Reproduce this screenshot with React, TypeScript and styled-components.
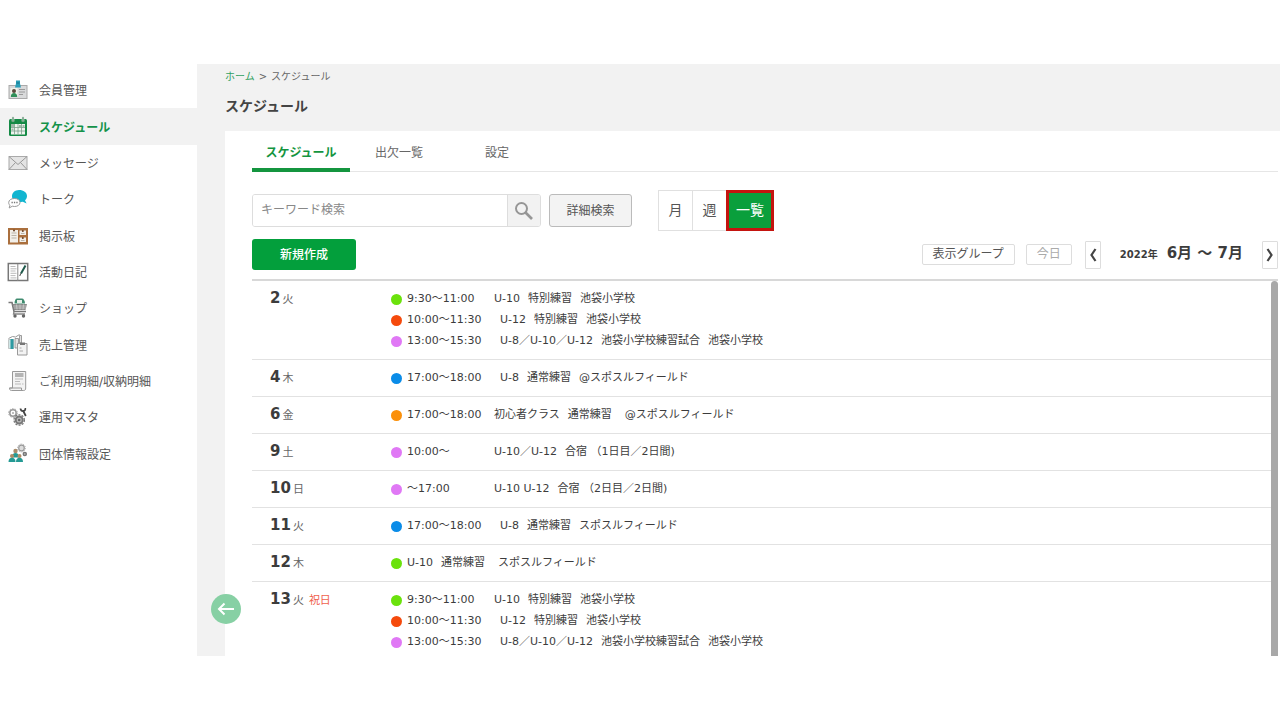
import React from 'react';
import styled, { createGlobalStyle, css } from 'styled-components';

const GlobalStyle = createGlobalStyle`
  * { box-sizing: border-box; }
  body {
    margin: 0;
    background: #fff;
    color: #444;
    font-family: "DejaVu Sans", "Noto Sans CJK JP", sans-serif;
    font-size: 12px;
  }
  button, input { font: inherit; color: inherit; margin: 0; padding: 0; }
  button { cursor: pointer; }
`;

const Frame = styled.div`
  height: 100vh;
  padding: 64px 0;
  display: flex;
  overflow: hidden;
`;

/* ---------- sidebar ---------- */

const Sidebar = styled.nav`
  flex: 0 0 197px;
  padding-top: 8px;
`;

const Menu = styled.ul`
  list-style: none;
  margin: 0;
  padding: 0;
  height: 400px;
  display: grid;
  grid-auto-rows: 1fr;
`;

const MenuLink = styled.a<{ $active?: boolean }>`
  height: 100%;
  padding-left: 7px;
  display: flex;
  align-items: center;
  gap: 10px;
  color: #555;
  text-decoration: none;
  white-space: nowrap;
  ${(p) =>
    p.$active &&
    css`
      background: #f2f2f2;
      color: #14934a;
      font-weight: bold;
    `}
`;

const MenuLabel = styled.span`
  padding-bottom: 1px;
`;

const MenuIcon = styled.svg`
  width: 22px;
  height: 22px;
  flex: none;
`;

/* ---------- main ---------- */

const Main = styled.main`
  flex: 1;
  min-width: 0;
  position: relative;
  padding-left: 28px;
  background: #f2f2f2;
  display: flex;
  flex-direction: column;
`;

const Breadcrumb = styled.nav`
  display: flex;
  gap: 4px;
  font-size: 10px;
  line-height: 26px;
  color: #666;
`;

const CrumbLink = styled.a`
  color: #33a162;
  text-decoration: none;
`;

const Title = styled.h1`
  margin: 0 0 9px;
  font-size: 14px;
  line-height: 32px;
  color: #444;
`;

const Panel = styled.section`
  flex: 1;
  min-height: 0;
  padding: 0 2px 0 27px;
  background: #fff;
  display: flex;
  flex-direction: column;
`;

const Tabs = styled.div`
  flex: none;
  display: flex;
  border-bottom: 1px solid #e6e6e6;
`;

const Tab = styled.button<{ $active?: boolean }>`
  width: 98px;
  height: 41px;
  margin-bottom: -1px;
  padding-top: 4px;
  border: 0;
  border-bottom: 4px solid ${(p) => (p.$active ? '#14953f' : 'transparent')};
  background: none;
  color: ${(p) => (p.$active ? '#14953f' : '#666')};
  font-weight: ${(p) => (p.$active ? 'bold' : 'normal')};
`;

const Toolbar = styled.div`
  flex: none;
  padding-top: 18px;
  display: flex;
  align-items: center;
`;

const SearchForm = styled.form`
  width: 289px;
  height: 33px;
  display: flex;
  border: 1px solid #ddd;
  border-radius: 3px;
  overflow: hidden;
`;

const SearchInput = styled.input`
  flex: 1;
  min-width: 0;
  padding: 0 8px 2px;
  border: 0;
  outline: 0;
  background: #fff;
  &::placeholder { color: #888; opacity: 1; }
`;

const SearchButton = styled.button`
  width: 33px;
  border: 0;
  border-left: 1px solid #ddd;
  background: #f2f2f2;
  display: flex;
  align-items: center;
  justify-content: center;
`;

const DetailButton = styled.button`
  width: 83px;
  height: 33px;
  margin: 0 26px 0 8px;
  padding-bottom: 3px;
  border: 1px solid #bbb;
  border-radius: 3px;
  background: #f3f3f3;
  color: #555;
`;

const ViewSwitch = styled.div`
  display: flex;
  height: 41px;
`;

const ViewButton = styled.button<{ $active?: boolean }>`
  width: 34px;
  padding: 0 0 3px;
  border: 1px solid #e0e0e0;
  border-right-width: 0;
  background: #fff;
  color: #555;
  font-size: 14px;
  ${(p) =>
    p.$active &&
    css`
      width: 48px;
      border: 3px solid #c4140f;
      background: #0a9f3c;
      color: #fff;
    `}
`;

const ActionRow = styled.div`
  flex: none;
  padding: 8px 0 9px;
  display: flex;
  align-items: center;
  justify-content: space-between;
  border-bottom: 2px solid #d8d8d8;
`;

const CreateButton = styled.button`
  width: 104px;
  height: 31px;
  padding-bottom: 3px;
  border: 0;
  border-radius: 3px;
  background: #039f3c;
  color: #fff;
  font-weight: 500;
`;

const Period = styled.div`
  display: flex;
  align-items: center;
  white-space: nowrap;
`;

const SmallButton = styled.button<{ $muted?: boolean }>`
  height: 21px;
  margin-right: ${(p) => (p.$muted ? 13 : 11)}px;
  padding: 0 10px;
  border: 1px solid #ddd;
  border-radius: 2px;
  background: #fff;
  line-height: 19px;
  color: ${(p) => (p.$muted ? '#aaa' : '#555')};
`;

const ArrowButton = styled.button`
  width: 16px;
  height: 28px;
  border: 1px solid #ddd;
  border-radius: 1px;
  background: #fff;
  display: flex;
  align-items: center;
  justify-content: center;
`;

const PeriodLabel = styled.h2`
  margin: 0;
  padding: 0 19px 1px;
  display: flex;
  align-items: baseline;
  gap: 9px;
  font-size: 15px;
  line-height: 20px;
  color: #3c3c3c;
`;

const Year = styled.span`
  font-size: 10px;
`;

/* ---------- schedule list ---------- */

const ListArea = styled.div`
  flex: 1;
  min-height: 0;
  display: flex;
`;

const DayList = styled.ul`
  flex: 1;
  min-width: 0;
  margin: 0;
  padding: 0;
  list-style: none;
  overflow: hidden;
`;

const ScrollBar = styled.div`
  flex: 0 0 7px;
  border-radius: 4px 4px 0 0;
  background: #a8a8a8;
`;

const Day = styled.li`
  padding: 7px 0 8px 18px;
  display: flex;
  border-bottom: 1px solid #e2e2e2;
  font-size: 11px;
  line-height: 21px;
  white-space: nowrap;
`;

const DateCell = styled.div`
  flex: 0 0 121px;
  height: 21px;
  display: flex;
  align-items: baseline;
  gap: 2px;
  color: #666;
`;

const DayNumber = styled.b`
  font-size: 15px;
  color: #3c3c3c;
`;

const Holiday = styled.span`
  margin-left: 3px;
  color: #f0624d;
`;

const Events = styled.ul`
  margin: 0;
  padding: 0;
  list-style: none;
`;

const Event = styled.li`
  height: 21px;
  display: flex;
  align-items: center;
  color: #3c3c3c;
`;

const Dot = styled.i<{ $color: string }>`
  width: 11px;
  height: 11px;
  margin: 1px 5px 0 0;
  border-radius: 50%;
  background: ${(p) => p.$color};
`;

const Time = styled.time<{ $wide?: boolean }>`
  width: ${(p) => (p.$wide ? 93 : 87)}px;
`;

const Part = styled.span<{ $beforeGap: number }>`
  margin-right: ${(p) => p.$beforeGap}px;
`;

const BackButton = styled.button`
  position: absolute;
  left: 14px;
  bottom: 32px;
  width: 30px;
  height: 30px;
  border: 0;
  border-radius: 50%;
  background: #87d0a4;
  display: flex;
  align-items: center;
  justify-content: center;
`;

/* ---------- icons ---------- */

const icons: Record<string, React.ReactNode> = {
  member: (
    <>
      <rect x="2" y="6.5" width="18" height="13" fill="#d9dadb" stroke="#aaa" />
      <rect x="3.5" y="9" width="7" height="9" fill="#f2f2ea" />
      <circle cx="7" cy="12" r="2" fill="#5b4a3c" />
      <path d="M3.8 18c0-3 1.4-4 3.2-4s3.2 1 3.2 4z" fill="#2f8f58" />
      <path d="M12 10.5h6M12 13h6M12 15.5h4" stroke="#9a9a9a" />
      <path d="M9 1.5h4v3l1 4H8l1-4z" fill="#2a9fb8" />
      <path d="M9.5 4h3" stroke="#1a6f86" />
    </>
  ),
  calendar: (
    <>
      <rect x="2" y="3" width="18" height="17" rx="1.5" fill="#148a45" />
      <rect x="4" y="8" width="14" height="10.5" fill="#eef3ee" />
      <path d="M4 11.5h14M4 15h14M7.5 8v10.5M11 8v10.5M14.5 8v10.5" stroke="#7aa08a" strokeWidth=".8" />
      <path d="M4 8h3v3H4zM4.500 12.500h2v2h-2zM12 9h2v2h-2zM15.500 9h2v2h-2z" fill="#9fb8a8" />
      <path d="M6 1.5v4M16 1.5v4" stroke="#dfeae2" strokeWidth="2.6" />
      <path d="M6 1.5v4M16 1.5v4" stroke="#6f9c80" strokeWidth="1.5" strokeLinecap="round" />
    </>
  ),
  mail: (
    <>
      <rect x="2" y="4.5" width="18" height="13" fill="#e4e4e4" stroke="#aaa" />
      <path d="M2 4.5l9 8 9-8M2 17.5l6.5-7M20 17.5l-6.5-7" fill="none" stroke="#999" />
    </>
  ),
  talk: (
    <>
      <path d="M12 2c4.5 0 8 2.500 8 6 0 2-.8 3.300-2 4.300l1.600 3.200-3.800-1.700c-1.100.3-2.400.4-3.800.4C7.600 14.200 5 11.600 5 8.200S8 2 12 2z" fill="#12b5d0" />
      <path d="M7.5 10.5c3.200 0 5.500 1.600 5.500 4s-2.300 4-5.500 4c-.8 0-1.500-.1-2.200-.3L2.200 20l.7-2.800C2 16.500 1.700 15.500 1.700 14.500c0-2.400 2.600-4 5.800-4z" fill="#fff" stroke="#999" />
      <path d="M4.5 14.5h1.300M6.900 14.500h1.300M9.300 14.500h1.300" stroke="#777" strokeWidth="1.300" />
    </>
  ),
  board: (
    <>
      <rect x="1" y="3" width="20" height="16.500" fill="#aa6f3d" />
      <path d="M3 5h8v12.500H3zM12.500 5.500H19v4.500h-6.500zM12.500 12.500H19v4.500h-6.500z" fill="#f2efe9" />
      <path d="M4.500 8h5M4.500 10.500h5M4.500 13h5M14 8.500h3.500M14 15.500h3.500" stroke="#bbb5aa" />
      <circle cx="7" cy="5.500" r="1" fill="#6b4021" />
      <circle cx="15.800" cy="6" r="1" fill="#6b4021" />
      <circle cx="15.800" cy="13" r="1" fill="#6b4021" />
    </>
  ),
  diary: (
    <>
      <rect x="1.300" y="2.500" width="19.400" height="17" fill="#fff" stroke="#777" strokeWidth="1.500" />
      <path d="M10.800 3v17" stroke="#888" />
      <path d="M3.500 5.500h5M3.500 7.800h6M3.500 10h5M3.500 12.300h6M3.500 14.600h5M3.500 16.900h6" stroke="#bbb" />
      <path d="M18.500 4.500L14 12.500" stroke="#205a4c" strokeWidth="2" />
      <path d="M13.800 12.300l-1 2.700" stroke="#444" />
    </>
  ),
  shop: (
    <>
      <path d="M7.500 6.500c0-3 1-5 2.500-5h5c1.500 0 3 2 3 5z" fill="#3f8b6f" />
      <path d="M10 3h5v3h-5z" fill="#e8efe9" />
      <path d="M1.500 5.500h3.500l2 9h12" fill="none" stroke="#777" strokeWidth="1.600" />
      <path d="M5.500 7H20l-1.500 6H7z" fill="#8a8a8a" />
      <path d="M6.500 9h13M7 11h12M9.500 7.500l.5 5M13 7.500v5M16.500 7.500l-.5 5" stroke="#d5d5d5" strokeWidth=".7" />
      <path d="M7 14.500l-.5 2.500H18" fill="none" stroke="#888" strokeWidth="1.300" />
      <circle cx="8" cy="19" r="1.700" fill="#666" />
      <circle cx="16.500" cy="19" r="1.700" fill="#666" />
    </>
  ),
  sales: (
    <>
      <path d="M1.500 5.500h5v9h-5z" fill="#cfe6e6" stroke="#999" strokeWidth=".5" />
      <path d="M3.500 5h3v10h-3z" fill="#2e9ba3" />
      <path d="M8 4.500h3.500V14H8zM12.500 1.500h2V9h-2z" fill="#e3e3e3" stroke="#888" strokeWidth=".8" />
      <path d="M1.500 4.500l4-2 3 .5 4-2.500" fill="none" stroke="#999" />
      <path d="M10.500 9.500h9.500v11.500h-9.500z" fill="#f3f3f3" stroke="#999" />
      <path d="M13 8.500h5v2.500h-5z" fill="#777" />
      <path d="M12.500 14h2M12.500 17h3.500" stroke="#aaa" />
    </>
  ),
  receipt: (
    <>
      <path d="M5.500 1.500h13.200v16.500c0 1.800-.7 2.500-2 2.500H4.500c-1.500 0-2-1-2-2.500h3z" fill="#f3f3f3" stroke="#999" />
      <path d="M2.500 18h12v2.500" fill="none" stroke="#999" />
      <path d="M8 4h8.500M8 6h8.500" stroke="#777" strokeWidth="1.200" />
      <path d="M8 9h8M8 11.500h5M8 14h6M15 14h1.500" stroke="#bbb" />
    </>
  ),
  master: (
    <>
      <circle cx="6" cy="7" r="3.200" fill="none" stroke="#999" strokeWidth="1.500" />
      <circle cx="6" cy="7" r="4.400" fill="none" stroke="#aaa" strokeDasharray="1.500 1.250" />
      <circle cx="6" cy="7" r="1" fill="#aaa" />
      <circle cx="12.200" cy="14" r="3.500" fill="#bbb" stroke="#777" strokeWidth="2" />
      <circle cx="12.200" cy="14" r="5.200" fill="none" stroke="#777" strokeWidth="1.300" strokeDasharray="2 1.300" />
      <circle cx="12.200" cy="14" r="1.300" fill="#666" />
      <path d="M13.500 2.500c.2 1.800 1.200 2.700 2.800 2.500l2.500 5" fill="none" stroke="#444" strokeWidth="1.800" />
      <path d="M16.300 5c1.600-.2 2.300-1.300 2.100-3" fill="none" stroke="#444" strokeWidth="1.500" />
    </>
  ),
  group: (
    <>
      <circle cx="14.500" cy="5" r="2.800" fill="#ddd" stroke="#999" strokeWidth="1.200" />
      <circle cx="14.500" cy="5" r="3.900" fill="none" stroke="#aaa" strokeDasharray="1.300 1.100" />
      <circle cx="17.800" cy="11" r="1.500" fill="#ccc" stroke="#777" strokeWidth="1.500" />
      <circle cx="8.500" cy="8" r="2.200" fill="#a98c6b" />
      <path d="M5 14.500c0-3.300 1.500-4.500 3.500-4.500s3.500 1.200 3.500 4.500z" fill="#249a94" />
      <circle cx="5" cy="13" r="2" fill="#b08c66" />
      <circle cx="12.500" cy="13" r="2" fill="#b08c66" />
      <path d="M1.500 19c0-3 1.500-4.200 3.500-4.200S8.500 16 8.500 19zM9 19c0-3 1.500-4.200 3.500-4.200S16 16 16 19z" fill="#249a94" />
    </>
  ),
};

const menu = [
  { icon: 'member', label: '会員管理' },
  { icon: 'calendar', label: 'スケジュール', active: true },
  { icon: 'mail', label: 'メッセージ' },
  { icon: 'talk', label: 'トーク' },
  { icon: 'board', label: '掲示板' },
  { icon: 'diary', label: '活動日記' },
  { icon: 'shop', label: 'ショップ' },
  { icon: 'sales', label: '売上管理' },
  { icon: 'receipt', label: 'ご利用明細/収納明細' },
  { icon: 'master', label: '運用マスタ' },
  { icon: 'group', label: '団体情報設定' },
];

/* ---------- data ---------- */

const GREEN = '#6be20c';
const RED = '#f54a0c';
const PINK = '#e078f5';
const BLUE = '#0a8ce8';
const ORANGE = '#fb900a';

type EventData = { color: string; time?: string; wide?: boolean; parts: string[]; farPlace?: boolean };
type DayData = { day: number; week: string; holiday?: string; events: EventData[] };

const practiceDay: EventData[] = [
  { color: GREEN, time: '9:30〜11:00', parts: ['U-10', '特別練習', '池袋小学校'] },
  { color: RED, time: '10:00〜11:30', wide: true, parts: ['U-12', '特別練習', '池袋小学校'] },
  { color: PINK, time: '13:00〜15:30', wide: true, parts: ['U-8／U-10／U-12', '池袋小学校練習試合', '池袋小学校'] },
];

const days: DayData[] = [
  { day: 2, week: '火', events: practiceDay },
  { day: 4, week: '木', events: [{ color: BLUE, time: '17:00〜18:00', wide: true, parts: ['U-8', '通常練習', '@スポスルフィールド'] }] },
  { day: 6, week: '金', events: [{ color: ORANGE, time: '17:00〜18:00', farPlace: true, parts: ['初心者クラス', '通常練習', '@スポスルフィールド'] }] },
  { day: 9, week: '土', events: [{ color: PINK, time: '10:00〜', parts: ['U-10／U-12', '合宿 （1日目／2日間)'] }] },
  { day: 10, week: '日', events: [{ color: PINK, time: '〜17:00', parts: ['U-10 U-12', '合宿 （2日目／2日間)'] }] },
  { day: 11, week: '火', events: [{ color: BLUE, time: '17:00〜18:00', wide: true, parts: ['U-8', '通常練習', 'スポスルフィールド'] }] },
  { day: 12, week: '木', events: [{ color: GREEN, farPlace: true, parts: ['U-10', '通常練習', 'スポスルフィールド'] }] },
  { day: 13, week: '火', holiday: '祝日', events: practiceDay },
];

export default function App() {
  return (
    <>
      <GlobalStyle />
      <Frame>
        <Sidebar aria-label="メニュー">
          <Menu>
            {menu.map((m) => (
              <li key={m.label}>
                <MenuLink href="#" $active={m.active}>
                  <MenuIcon viewBox="0 0 22 22" aria-hidden="true">{icons[m.icon]}</MenuIcon>
                  <MenuLabel>{m.label}</MenuLabel>
                </MenuLink>
              </li>
            ))}
          </Menu>
        </Sidebar>
        <Main>
          <Breadcrumb>
            <CrumbLink href="#">ホーム</CrumbLink>
            <span>&gt;</span>
            <span>スケジュール</span>
          </Breadcrumb>
          <Title>スケジュール</Title>
          <Panel>
            <Tabs role="tablist">
              <Tab role="tab" aria-selected="true" $active>スケジュール</Tab>
              <Tab role="tab">出欠一覧</Tab>
              <Tab role="tab">設定</Tab>
            </Tabs>
            <Toolbar>
              <SearchForm onSubmit={(e) => e.preventDefault()}>
                <SearchInput type="text" placeholder="キーワード検索" aria-label="キーワード検索" />
                <SearchButton type="submit" aria-label="検索">
                  <svg width="20" height="20" viewBox="0 0 20 20" fill="none" stroke="#969696">
                    <circle cx="7.5" cy="7.5" r="5.5" strokeWidth="2" />
                    <path d="M11.5 11.5l6.5 6.5" strokeWidth="2.6" />
                  </svg>
                </SearchButton>
              </SearchForm>
              <DetailButton>詳細検索</DetailButton>
              <ViewSwitch>
                <ViewButton>月</ViewButton>
                <ViewButton>週</ViewButton>
                <ViewButton $active>一覧</ViewButton>
              </ViewSwitch>
            </Toolbar>
            <ActionRow>
              <CreateButton>新規作成</CreateButton>
              <Period>
                <SmallButton>表示グループ</SmallButton>
                <SmallButton $muted>今日</SmallButton>
                <ArrowButton aria-label="前へ">
                  <svg width="8" height="14" viewBox="0 0 8 14" fill="none" stroke="#444" strokeWidth="2.2">
                    <path d="M6.5 1L2.5 7l4 6" />
                  </svg>
                </ArrowButton>
                <PeriodLabel>
                  <Year>2022年</Year>
                  <span>6月 〜 7月</span>
                </PeriodLabel>
                <ArrowButton aria-label="次へ">
                  <svg width="8" height="14" viewBox="0 0 8 14" fill="none" stroke="#444" strokeWidth="2.2">
                    <path d="M1.5 1l4 6-4 6" />
                  </svg>
                </ArrowButton>
              </Period>
            </ActionRow>
            <ListArea>
              <DayList>
                {days.map((d) => (
                  <Day key={d.day}>
                    <DateCell>
                      <DayNumber>{d.day}</DayNumber>
                      <span>{d.week}</span>
                      {d.holiday && <Holiday>{d.holiday}</Holiday>}
                    </DateCell>
                    <Events>
                      {d.events.map((e, i) => (
                        <Event key={i}>
                          <Dot $color={e.color} />
                          {e.time && <Time $wide={e.wide}>{e.time}</Time>}
                          {e.parts.map((part, j) => (
                            <Part key={j} $beforeGap={e.farPlace && j === 1 ? 13 : 8}>{part}</Part>
                          ))}
                        </Event>
                      ))}
                    </Events>
                  </Day>
                ))}
              </DayList>
              <ScrollBar />
            </ListArea>
          </Panel>
          <BackButton aria-label="戻る">
            <svg width="18" height="16" viewBox="0 0 18 16" fill="none" stroke="#fff" strokeWidth="2">
              <path d="M17 8H2M7.5 2.5L2 8l5.5 5.5" />
            </svg>
          </BackButton>
        </Main>
      </Frame>
    </>
  );
}
